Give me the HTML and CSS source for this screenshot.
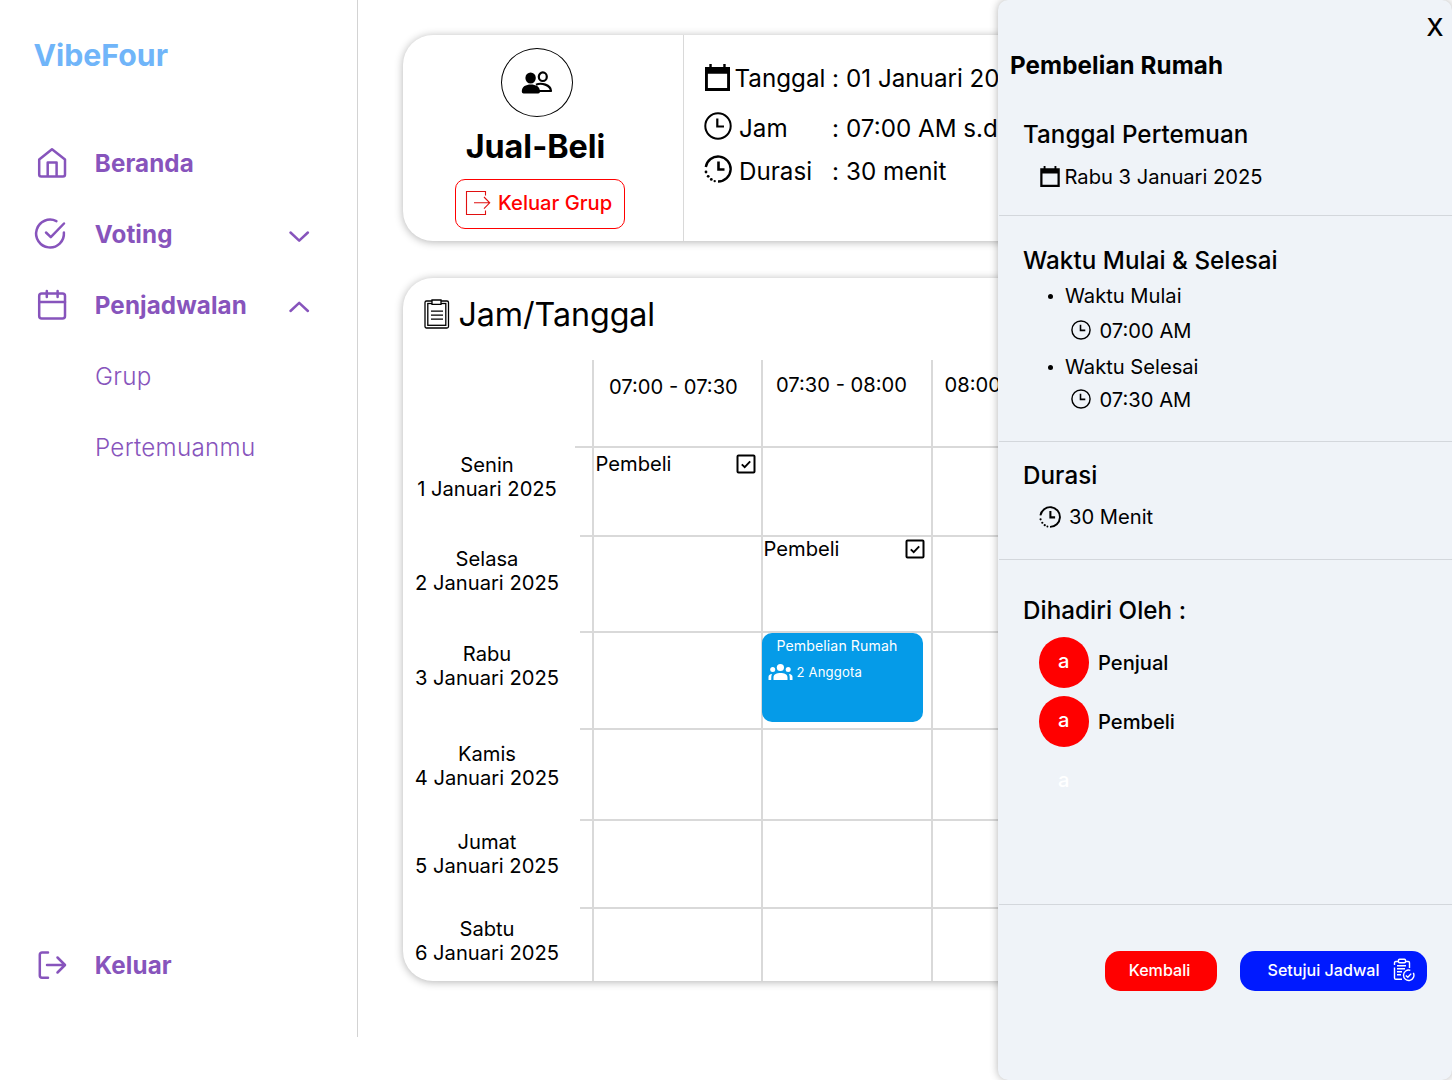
FILE: index.html
```html
<!DOCTYPE html>
<html lang="id">
<head>
<meta charset="utf-8">
<title>VibeFour</title>
<link rel="stylesheet" href="styles.css">
</head>
<body>
<svg class="defs" aria-hidden="true">
  <symbol id="calendar" viewBox="0 0 26 28">
    <path d="M0 3h4.500V0h2.500v3h12V0h2.500v3H26v25H0zM3 10v15h20V10z" fill-rule="evenodd"/>
  </symbol>
  <symbol id="clock" viewBox="0 0 28 28">
    <circle cx="14" cy="14" r="12.700" fill="none" stroke="currentColor" stroke-width="2"/>
    <path d="M13.300 6.500V14.500H20" fill="none" stroke="currentColor" stroke-width="2.200"/>
  </symbol>
  <symbol id="duration" viewBox="0 0 28 28">
    <path d="M1.800 12A12.500 12.500 0 1 1 14 26.500" fill="none" stroke="currentColor" stroke-width="2.400"/>
    <path d="M14.500 6.500V14.500H20.500" fill="none" stroke="currentColor" stroke-width="2.600"/>
    <circle cx="2" cy="17" r="1.400"/><circle cx="4.200" cy="21.300" r="1.400"/><circle cx="7.300" cy="24.400" r="1.400"/><circle cx="10.700" cy="26.100" r="1.200"/>
  </symbol>
  <symbol id="check" viewBox="0 0 20 20">
    <rect x="1.500" y="1.500" width="17" height="17" rx="1" fill="none" stroke="currentColor" stroke-width="2"/>
    <path d="M5.800 10.300l2.900 2.900 5.500-5.900" fill="none" stroke="currentColor" stroke-width="1.900"/>
  </symbol>
</svg>

<div class="app">
  <nav class="sidebar">
    <div class="brand">VibeFour</div>
    <a class="nav-item">
      <svg class="nav-icon" viewBox="0 0 40 40"><path d="M7.200 16.500L20 6.200l13 10.300V31.500a2 2 0 0 1-2 2H9.200a2 2 0 0 1-2-2zM15.700 33.500V19.600h8.900v13.900"/></svg>
      <span>Beranda</span>
    </a>
    <a class="nav-item">
      <svg class="nav-icon" viewBox="0 0 40 40"><path d="M24.400 7.200A13.900 13.900 0 1 0 31.900 18.500M14 18.500l4.800 4.600L32 9.500"/></svg>
      <span>Voting</span>
      <svg class="chevron" viewBox="0 0 24 16"><path d="M3.500 5.500l8.700 8.200L20.900 5.500"/></svg>
    </a>
    <a class="nav-item">
      <svg class="nav-icon" viewBox="0 0 40 40"><rect x="7.200" y="8.500" width="25.800" height="25" rx="2.500"/><path d="M7.200 17H33M14.800 6v6M25.600 6v6"/></svg>
      <span>Penjadwalan</span>
      <svg class="chevron" viewBox="0 0 24 16"><path d="M3.500 13l8.700-8.200 8.700 8.200"/></svg>
    </a>
    <a class="nav-item sub">Grup</a>
    <a class="nav-item sub">Pertemuanmu</a>
    <a class="nav-item logout">
      <svg class="nav-icon" viewBox="0 0 40 40"><path d="M16 7.500H10a2.200 2.200 0 0 0-2.200 2.200v20.800a2.200 2.200 0 0 0 2.200 2.200h6M15 20h17.500M25.500 12.500l7.500 7.500-7.500 7.500"/></svg>
      <span>Keluar</span>
    </a>
  </nav>

  <main class="content">
    <section class="card group-card">
      <div class="group">
        <div class="group-avatar">
          <svg width="32" height="24" viewBox="0 0 32 24">
            <ellipse cx="21.800" cy="5.700" rx="4" ry="4.300" fill="none" stroke="#000" stroke-width="2.200"/>
            <path d="M15 13.700C20 11.500 29.800 13.500 30 20H18" fill="none" stroke="#000" stroke-width="2.200" stroke-linejoin="round"/>
            <ellipse cx="9.600" cy="7" rx="5.200" ry="5.600"/>
            <path d="M.800 20.500C.800 15.600 5 13.600 9.800 13.600s9.200 2 9.200 6.900q0 2-1.800 2H2.600q-1.800 0-1.800-2z"/>
          </svg>
        </div>
        <h1>Jual-Beli</h1>
        <button class="leave">
          <svg width="26" height="26" viewBox="0 0 26 26"><path d="M20.500 5.500V1.500H1.500v23H20.500v-4M9 12.800H24.500M19 7l5.700 5.800L19 18.700"/></svg>
          <span>Keluar Grup</span>
        </button>
      </div>
      <div class="details">
        <div class="detail date"><svg class="d-cal"><use href="#calendar"/></svg><span class="term">Tanggal</span><span class="colon">:</span><span>01 Januari 20</span></div>
        <div class="detail"><svg class="d-clock"><use href="#clock"/></svg><span class="term">Jam</span><span class="colon">:</span><span>07:00 AM s.d</span></div>
        <div class="detail"><svg class="d-clock"><use href="#duration"/></svg><span class="term">Durasi</span><span class="colon">:</span><span>30 menit</span></div>
      </div>
    </section>

    <section class="card schedule">
      <h2>
        <svg width="26" height="30" viewBox="0 0 26 30" fill="none" stroke="#000">
          <rect x="1" y="2" width="23.500" height="27" rx="1.500" stroke-width="1.300"/>
          <rect x="3.800" y="4.500" width="18" height="21.800" stroke-width="1.300"/>
          <path d="M8 1h9v4.300H8z" fill="#fff" stroke-width="1.300"/>
          <path d="M7 12.200h12M7 16.200h12M7 20.200h12" stroke-width="1.300"/>
        </svg>
        <span>Jam/Tanggal</span>
      </h2>
      <div class="timetable">
        <div class="row head"><div class="label"></div><div class="tick"></div><div class="cell">07:00 - 07:30</div><div class="cell">07:30 - 08:00</div><div class="cell">08:00</div></div>
        <div class="row"><div class="label">Senin<br>1 Januari 2025</div><div class="tick"></div>
          <div class="cell vote">Pembeli<svg class="box"><use href="#check"/></svg></div><div class="cell"></div><div class="cell"></div></div>
        <div class="row"><div class="label">Selasa<br>2 Januari 2025</div><div class="tick"></div>
          <div class="cell"></div><div class="cell vote">Pembeli<svg class="box"><use href="#check"/></svg></div><div class="cell"></div></div>
        <div class="row"><div class="label">Rabu<br>3 Januari 2025</div><div class="tick"></div>
          <div class="cell"></div>
          <div class="cell">
            <div class="event">
              <div class="event-title">Pembelian Rumah</div>
              <div class="event-members">
                <svg width="25" height="18" viewBox="0 0 25 18" fill="#fff"><circle cx="12.400" cy="4.500" r="3.600"/><circle cx="4.700" cy="6.500" r="2.500"/><circle cx="20.200" cy="6.500" r="2.500"/><path d="M5.500 17v-2.500c0-3.500 3.500-4.500 7-4.500s7 1 7 4.500V17zM.500 17v-3q0-2.700 3.500-3Q3 12.500 3.200 17zM24.500 17v-3q0-2.700-3.500-3 1 1.500.8 6z"/></svg>
                2 Anggota
              </div>
            </div>
          </div><div class="cell"></div></div>
        <div class="row"><div class="label">Kamis<br>4 Januari 2025</div><div class="tick"></div><div class="cell"></div><div class="cell"></div><div class="cell"></div></div>
        <div class="row"><div class="label">Jumat<br>5 Januari 2025</div><div class="tick"></div><div class="cell"></div><div class="cell"></div><div class="cell"></div></div>
        <div class="row"><div class="label">Sabtu<br>6 Januari 2025</div><div class="tick"></div><div class="cell"></div><div class="cell"></div><div class="cell"></div></div>
      </div>
    </section>
  </main>

  <aside class="drawer">
    <header>
      <button class="close">X</button>
      <h2>Pembelian Rumah</h2>
    </header>
    <section class="when">
      <h3>Tanggal Pertemuan</h3>
      <p><svg class="s-cal"><use href="#calendar"/></svg>Rabu 3 Januari 2025</p>
    </section>
    <section class="times">
      <h3>Waktu Mulai &amp; Selesai</h3>
      <ul>
        <li>Waktu Mulai</li>
        <li class="time first"><svg class="s-clock"><use href="#clock"/></svg>07:00 AM</li>
        <li>Waktu Selesai</li>
        <li class="time"><svg class="s-clock"><use href="#clock"/></svg>07:30 AM</li>
      </ul>
    </section>
    <section class="length">
      <h3>Durasi</h3>
      <p><svg class="s-dur"><use href="#duration"/></svg>30 Menit</p>
    </section>
    <section class="people">
      <h3>Dihadiri Oleh :</h3>
      <div class="person"><span class="avatar">a</span>Penjual</div>
      <div class="person"><span class="avatar">a</span>Pembeli</div>
      <div class="person"><span class="avatar blank">a</span></div>
    </section>
    <footer>
      <button class="back">Kembali</button>
      <button class="approve">Setujui Jadwal
        <svg width="22" height="24" viewBox="0 0 22 24" fill="none" stroke="#fff" stroke-width="1.400">
          <path d="M5.500 3.500H2.800Q1.500 3.500 1.500 5v2M1.500 9.500V20q0 1.300 1.300 1.300H9M12.500 3.500h2.700q1.300 0 1.300 1.300V10M5.500 2.300q0-1 1-1h5q1 0 1 1v1.400q0 1-1 1h-5q-1 0-1-1zM4 7.700h9M4 10.700h8M4 13.700h5M4 16.700h4"/>
          <path d="M20.300 14.800a5.200 5.200 0 1 1-3-2.500M12.800 17.500l2 1.800 3.400-3.700"/>
        </svg>
      </button>
    </footer>
  </aside>
</div>
</body>
</html>
```
FILE: styles.css
```css
* { box-sizing: border-box; }
body { margin: 0; background: #fff; color: #000; font-family: Inter, "Liberation Sans", sans-serif; font-size: 20.150px; }
h1, h2, h3, p, ul { margin: 0; padding: 0; font-weight: 400; }
button { font: inherit; margin: 0; padding: 0; border: 0; background: none; white-space: nowrap; }
svg { flex: none; }
.defs { display: none; }
.app { position: relative; display: flex; width: 1452px; height: 1080px; overflow: hidden; }

/* Sidebar */
.sidebar { flex: none; display: flex; flex-direction: column; width: 358px; height: 1037px; border-right: 1px solid #d3d3d3; color: #8754bc; }
.brand { height: 110px; margin-bottom: 18px; padding-left: 33.500px; line-height: 110px; font-size: 30.250px; font-weight: 700; color: #70b5f9; }
.nav-item { display: flex; align-items: center; height: 71px; padding: 0 46px 0 32px; font-size: 24.200px; font-weight: 700; letter-spacing: .1px; }
.nav-icon { width: 40px; height: 40px; margin: -1px 22.800px 0 0; }
.nav-icon, .chevron { fill: none; stroke: currentColor; stroke-width: 2.500; stroke-linecap: round; stroke-linejoin: round; }
.chevron { width: 24px; height: 16px; margin-left: auto; }
.sub { padding-left: 95px; font-weight: 300; letter-spacing: .280px; }
.logout { margin-top: auto; margin-bottom: 36.500px; }

/* Main cards */
.content { flex: 1; display: flex; flex-direction: column; gap: 37px; padding: 35px 20px 0 45px; white-space: nowrap; }
.card { background: #fff; border-radius: 30px; box-shadow: 0 1px 8px rgba(0, 0, 0, .3); }
.group-card { display: flex; height: 206px; }
.group { display: flex; flex-direction: column; align-items: center; width: 281px; padding: 13px 0 0 2px; border-right: 1px solid #d9d9d9; }
.group-avatar { display: flex; align-items: center; justify-content: center; width: 72px; height: 69px; margin-right: 15px; border: 1px solid #000; border-radius: 50%; }
.group h1 { height: 40px; margin: 10px 17px 0 0; line-height: 40px; font-size: 32.300px; font-weight: 700; }
.leave { display: flex; align-items: center; gap: 7px; width: 170px; height: 50px; margin: 12px 8px 0 0; padding: 0 0 2px 9px; border: 1px solid #f00; border-radius: 10px; color: #f00; font-weight: 500; }
.leave span { margin-top: -2px; }
.leave svg { fill: none; stroke: #e01010; stroke-width: 1.100; }
.details { padding: 22px 0 0 20px; font-size: 24.200px; }
.detail { display: flex; align-items: center; height: 43px; }
.detail.date { margin-bottom: 8px; height: 42px; }
.d-cal { width: 25px; height: 27px; margin: -1px 4.500px 0 1px; }
.d-clock { width: 28px; height: 28px; margin: -5px 7px 0 0; }
.term { width: 93px; }
.date .term { width: 97.500px; }
.colon { width: 14px; }

/* Timetable */
.schedule { height: 703px; overflow: hidden; }
.schedule h2 { display: flex; align-items: center; gap: 8.500px; height: 72px; margin-bottom: 10px; padding-left: 21px; font-size: 32.250px; letter-spacing: -.080px; }
.row { display: grid; grid-template-columns: 177px 12px 168.500px 170.500px 1fr; height: 89px; line-height: 24.200px; }
.row.head { height: 86px; }
.row:nth-child(3) { height: 96px; }
.row:nth-child(4) { height: 97px; }
.row:nth-child(5) { height: 91px; }
.row:nth-child(6) { height: 88px; }
.row:nth-child(7) { height: 74px; }
.label { padding: 11.500px 9px 0 0; text-align: center; }
.row:nth-child(2) .label { padding-top: 6.500px; }
.row:nth-child(4) .label { padding-top: 10.500px; }
.row:nth-child(5) .label { padding-top: 14px; }
.row:nth-child(6) .label { padding-top: 11px; }
.row:nth-child(7) .label { padding-top: 9.500px; }
.tick { border-top: 2px solid #d9d9d9; }
.head .tick { border: 0; }
.row:nth-child(2) .tick { margin-left: -5px; }
.cell { border-top: 2px solid #d9d9d9; border-left: 2px solid #d9d9d9; }
.head .cell { border-top: 0; padding: 13px 0 0 13.500px; }
.head .cell:nth-child(3) { padding: 15px 0 0 15px; }
.head .cell:nth-child(5) { padding-left: 11.500px; }
.vote { display: flex; justify-content: space-between; align-items: flex-start; padding: 4px 4.500px 0 1.500px; }
.row:nth-child(3) .vote { padding: 0 6.500px 0 1px; }
.box { width: 20px; height: 20px; margin-top: 2px; }
.event { width: 161.500px; height: 88.500px; margin-left: -1px; padding: 3px 6px; border-radius: 10px; background: #059be8; color: #fff; font-size: 14.100px; letter-spacing: .1px; }
.event-title { height: 22px; padding-left: 9px; line-height: 20px; }
.event-members { display: flex; align-items: center; gap: 4px; height: 28px; font-size: 13.100px; letter-spacing: .15px; }

/* The drawer covers the right side of the cards */
.drawer { position: absolute; top: 0; right: 0; display: flex; flex-direction: column; width: 454px; height: 1080px; border-radius: 10px; background: #eff3f8; box-shadow: 0 0 8px rgba(0, 0, 0, .3); }
.drawer header { display: flex; flex-direction: column; height: 104px; font-size: 24.200px; }
.close { align-self: flex-end; width: 32px; height: 30px; margin: 13px 1px 0 0; line-height: 30px; font-weight: 500; }
.drawer header h2 { height: 40px; margin-top: 3px; padding-left: 12px; line-height: 40px; font-size: 24.200px; font-weight: 700; letter-spacing: .1px; }
.drawer section { margin-left: 1px; padding-left: 24px; border-bottom: 1px solid #d3d7dc; }
.drawer h3 { height: 40px; line-height: 40px; font-size: 24.200px; font-weight: 500; letter-spacing: .050px; }
.drawer p { display: flex; align-items: center; }
.when { height: 112px; padding-top: 11px; }
.when p { height: 43px; padding-left: 16.500px; }
.s-cal { width: 20px; height: 21px; margin-right: 5px; }
.times { height: 226px; padding-top: 25px; }
.times ul { list-style: none; margin-top: -2px; }
.times li { display: flex; align-items: center; height: 33px; padding-left: 24px; }
.times li:not(.time)::before { content: ""; width: 5px; height: 5px; margin: 1px 12.500px 0 .500px; border-radius: 50%; background: #000; }
.times .time { height: 32px; padding-left: 48px; }
.times .time.first { height: 36px; margin-bottom: 2px; }
.s-clock { width: 20px; height: 20px; margin-right: 8.500px; }
.length { height: 118px; padding-top: 14px; }
.length p { height: 41px; padding-left: 15.500px; }
.s-dur { width: 22px; height: 22px; margin-right: 8.500px; }
.people { height: 345px; padding-top: 31px; }
.person { display: flex; align-items: center; gap: 9px; height: 51px; margin: 6px 0 8px 15.500px; line-height: 47px; font-weight: 500; }
.person + .person { margin-top: 0; }
.person:last-child { margin-top: 9px; }
.avatar { width: 50.500px; height: 50.500px; border-radius: 50%; background: #f00; color: #fff; text-align: center; }
.avatar.blank { background: none; }
.drawer footer { display: flex; justify-content: flex-end; gap: 23px; padding: 45.500px 25px 0 0; font-size: 16.100px; font-weight: 500; }
.drawer footer button { display: flex; align-items: center; height: 40.500px; border-radius: 15px; color: #fff; }
.drawer footer .back { justify-content: center; width: 112px; padding: 0 3px 1px 0; background: #f00; }
.drawer footer .approve { gap: 14px; width: 187px; padding: 0 0 1px 27.500px; background: #001aff; }
```
